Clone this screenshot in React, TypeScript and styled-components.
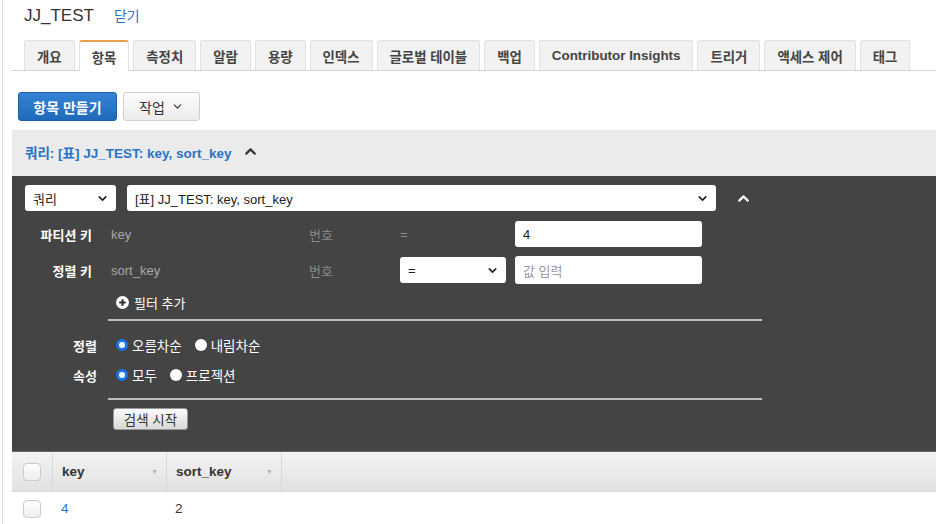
import React from 'react';
import styled, { createGlobalStyle } from 'styled-components';
import { ChevronDown, ChevronUp } from 'lucide-react';

const GlobalStyle = createGlobalStyle`
	html, body {
		margin: 0;
		padding: 0;
		background: #fff;
	}
	body {
		font-family: "Liberation Sans", "Noto Sans CJK KR", sans-serif;
		color: #333;
	}
`;

const tabs = ['개요', '항목', '측정치', '알람', '용량', '인덱스', '글로벌 테이블', '백업', 'Contributor Insights', '트리거', '액세스 제어', '태그'];

const App = (): JSX.Element => {
	return (
		<>
			<GlobalStyle />
			<Page>
				<TitleBar>
					<Title>JJ_TEST</Title>
					<CloseLink>닫기</CloseLink>
				</TitleBar>
				<TabBar>
					{tabs.map((t) => (
						<Tab key={t} active={t === '항목'}>{t}</Tab>
					))}
				</TabBar>
				<Toolbar>
					<PrimaryButton>항목 만들기</PrimaryButton>
					<SecondaryButton>작업 <ChevronDown size={13} strokeWidth={2} /></SecondaryButton>
				</Toolbar>
				<QueryHeader>
					<QueryTitle>쿼리: [표] JJ_TEST: key, sort_key</QueryTitle>
					<ChevronUp size={17} strokeWidth={3} color="#333" />
				</QueryHeader>
				<Panel>
					<QueryRow>
						<Select width={91}>쿼리<ChevronDown size={13} strokeWidth={3} /></Select>
						<Select width={589}>[표] JJ_TEST: key, sort_key<ChevronDown size={13} strokeWidth={3} /></Select>
						<Collapse><ChevronUp size={17} strokeWidth={3} color="#fff" /></Collapse>
					</QueryRow>
					<KeyGrid>
						<KeyLabel>파티션 키</KeyLabel>
						<Muted>key</Muted>
						<Faint>번호</Faint>
						<Faint>=</Faint>
						<Input>4</Input>

						<KeyLabel>정렬 키</KeyLabel>
						<Muted>sort_key</Muted>
						<Faint>번호</Faint>
						<Select width={106}>=<ChevronDown size={13} strokeWidth={3} /></Select>
						<Input placeholder>값 입력</Input>
					</KeyGrid>
					<AddFilter>
						<svg width="13" height="13" viewBox="0 0 13 13">
							<circle cx="6.5" cy="6.5" r="6.5" fill="#fff" />
							<path d="M6.5 3.2v6.6M3.2 6.5h6.6" stroke="#333" strokeWidth="2.2" />
						</svg>
						필터 추가
					</AddFilter>
					<Divider />
					<OptionGrid>
						<KeyLabel>정렬</KeyLabel>
						<Options>
							<Radio checked>오름차순</Radio>
							<Radio>내림차순</Radio>
						</Options>
						<KeyLabel>속성</KeyLabel>
						<Options>
							<Radio checked>모두</Radio>
							<Radio>프로젝션</Radio>
						</Options>
					</OptionGrid>
					<Divider />
					<SearchRow>
						<SearchButton>검색 시작</SearchButton>
					</SearchRow>
				</Panel>
				<Table>
					<HeaderRow>
						<CheckCell><CheckBox /></CheckCell>
						<HeadCell width={114}>key<SortMark>▼</SortMark></HeadCell>
						<HeadCell width={116}>sort_key<SortMark>▼</SortMark></HeadCell>
					</HeaderRow>
					<BodyRow>
						<CheckCell><CheckBox /></CheckCell>
						<Cell width={114} link>4</Cell>
						<Cell width={116}>2</Cell>
					</BodyRow>
				</Table>
			</Page>
		</>
	);
};

const Radio = ({ checked, children }: { checked?: boolean; children: React.ReactNode }): JSX.Element => (
	<RadioItem>
		<RadioDot checked={checked} />
		{children}
	</RadioItem>
);

const Page = styled.div`
	margin-left: 2px;
	border-left: 1px solid #dcdcdc;
	padding-left: 9px;
	min-height: 524px;
	box-sizing: border-box;
`;

const TitleBar = styled.div`
	display: flex;
	align-items: baseline;
	gap: 20px;
	height: 40px;
	padding-left: 12px;
	padding-top: 5px;
	box-sizing: border-box;
`;

const Title = styled.span`
	font-size: 17px;
	color: #333;
`;

const CloseLink = styled.a`
	font-size: 14px;
	color: #2a73c5;
`;

const TabBar = styled.div`
	display: flex;
	gap: 4px;
	padding-left: 12px;
	border-bottom: 1px solid #d5d5d5;
	height: 30px;
`;

const Tab = styled.div<{ active?: boolean }>`
	display: flex;
	align-items: center;
	padding: 0 12px;
	justify-content: center;
	font-size: 13.4px;
	font-weight: bold;
	color: #444;
	background: ${({ active }): string => (active ? '#fff' : '#f2f2f2')};
	border: 1px solid #e1e1e1;
	border-top: ${({ active }): string => (active ? '2px solid #e8a04f' : '1px solid #e1e1e1')};
	border-bottom: none;
	border-radius: 3px 3px 0 0;
	height: ${({ active }): string => (active ? '31px' : '30px')};
	box-sizing: border-box;
	white-space: nowrap;
`;

const Toolbar = styled.div`
	display: flex;
	gap: 6px;
	padding: 21px 0 9px 6px;
	border-bottom: 1px solid #e4e4e4;
`;

const PrimaryButton = styled.button`
	height: 29px;
	width: 99px;
	border: 1px solid #1b5fa8;
	border-radius: 3px;
	background: linear-gradient(#3583d6, #1f69bb);
	color: #fff;
	font: bold 14px "Liberation Sans", "Noto Sans CJK KR", sans-serif;
	padding: 0;
`;

const SecondaryButton = styled.button`
	height: 29px;
	width: 77px;
	border: 1px solid #d0d0d0;
	border-radius: 3px;
	background: linear-gradient(#fcfcfc, #ececec);
	color: #333;
	font: 14px "Liberation Sans", "Noto Sans CJK KR", sans-serif;
	display: flex;
	align-items: center;
	justify-content: center;
	gap: 6px;
	padding: 0;
`;

const QueryHeader = styled.div`
	display: flex;
	align-items: center;
	gap: 10px;
	height: 45px;
	padding: 0 0 4px 13px;
	box-sizing: border-box;
	background: #ebebeb;
`;

const QueryTitle = styled.span`
	font-size: 13.5px;
	font-weight: bold;
	color: #2a73c5;
`;

const Panel = styled.div`
	background: #444;
	padding-top: 9px;
	height: 275px;
	box-sizing: border-box;
`;

const QueryRow = styled.div`
	display: flex;
	align-items: center;
	gap: 11px;
	padding-left: 13px;
`;

const Select = styled.div<{ width: number }>`
	width: ${({ width }): number => width}px;
	height: 26px;
	box-sizing: border-box;
	background: #fff;
	border-radius: 3px;
	display: flex;
	align-items: center;
	justify-content: space-between;
	padding: 0 7px 0 8px;
	font-size: 13px;
	color: #222;
`;

const Collapse = styled.div`
	display: flex;
	padding-left: 8px;
`;

const KeyGrid = styled.div`
	display: grid;
	grid-template-columns: 99px 198px 91px 115px 187px;
	grid-auto-rows: 26px;
	row-gap: 10px;
	align-items: center;
	margin-top: 10px;
`;

const KeyLabel = styled.div`
	text-align: right;
	padding-right: 19px;
	font-size: 13px;
	font-weight: bold;
	color: #fff;
`;

const Muted = styled.div`
	font-size: 13px;
	color: #a8a8a8;
`;

const Faint = styled.div`
	font-size: 13px;
	color: #8c8c8c;
`;

const Input = styled.div<{ placeholder?: boolean }>`
	box-sizing: border-box;
	background: #fff;
	border-radius: 3px;
	display: flex;
	align-items: center;
	padding-left: 8px;
	font-size: 13px;
	color: ${({ placeholder }): string => (placeholder ? '#999' : '#222')};
	height: ${({ placeholder }): string => (placeholder ? '28px' : '26px')};
`;

const AddFilter = styled.div`
	display: flex;
	align-items: center;
	gap: 5px;
	padding: 10px 0 7px 104px;
	font-size: 13px;
	color: #fff;
`;

const Divider = styled.div`
	margin-left: 96px;
	width: 654px;
	height: 2px;
	background: #bdbdbd;
`;

const OptionGrid = styled.div`
	display: grid;
	grid-template-columns: 104px auto;
	grid-auto-rows: 30px;
	align-items: center;
	padding: 9px 0 8px;
`;

const Options = styled.div`
	display: flex;
	gap: 13px;
`;

const RadioItem = styled.span`
	display: flex;
	align-items: center;
	gap: 4px;
	font-size: 13.5px;
	color: #fff;
`;

const RadioDot = styled.span<{ checked?: boolean }>`
	width: 12px;
	height: 12px;
	border-radius: 50%;
	background: #fff;
	box-sizing: border-box;
	border: ${({ checked }): string => (checked ? '3px solid #1a73e8' : 'none')};
`;

const SearchRow = styled.div`
	padding: 8px 0 0 101px;
`;

const SearchButton = styled.button`
	height: 22px;
	width: 75px;
	border: 1px solid #999;
	border-radius: 3px;
	background: linear-gradient(#fdfdfd, #d8d8d8);
	color: #333;
	font: 13.5px "Liberation Sans", "Noto Sans CJK KR", sans-serif;
	padding: 0;
`;

const Table = styled.div`
	display: flex;
	flex-direction: column;
`;

const HeaderRow = styled.div`
	display: flex;
	height: 39px;
	background: linear-gradient(#f3f3f3, #e2e2e2);
	border-top: 1px solid #666;
	border-bottom: 1px solid #d8d8d8;
`;

const BodyRow = styled.div`
	display: flex;
	height: 33px;
`;

const CheckCell = styled.div`
	width: 40px;
	display: flex;
	align-items: center;
	justify-content: center;
`;

const CheckBox = styled.span`
	width: 18px;
	height: 18px;
	border: 1px solid #ccc;
	border-radius: 4px;
	background: linear-gradient(#fff, #eee);
	box-sizing: border-box;
`;

const HeadCell = styled.div<{ width: number }>`
	width: ${({ width }): number => width}px;
	display: flex;
	align-items: center;
	justify-content: space-between;
	padding: 0 8px 0 9px;
	box-sizing: border-box;
	border-left: 1px solid #d8d8d8;
	font-size: 13.5px;
	font-weight: bold;
	color: #333;

	&:last-child {
		border-right: 1px solid #d8d8d8;
	}
`;

const SortMark = styled.span`
	font-size: 7px;
	color: #b0b0b0;
`;

const Cell = styled.div<{ width: number; link?: boolean }>`
	width: ${({ width }): number => width}px;
	display: flex;
	align-items: center;
	padding-left: 9px;
	box-sizing: border-box;
	font-size: 13.5px;
	color: ${({ link }): string => (link ? '#2a73c5' : '#333')};
`;

export default App;
